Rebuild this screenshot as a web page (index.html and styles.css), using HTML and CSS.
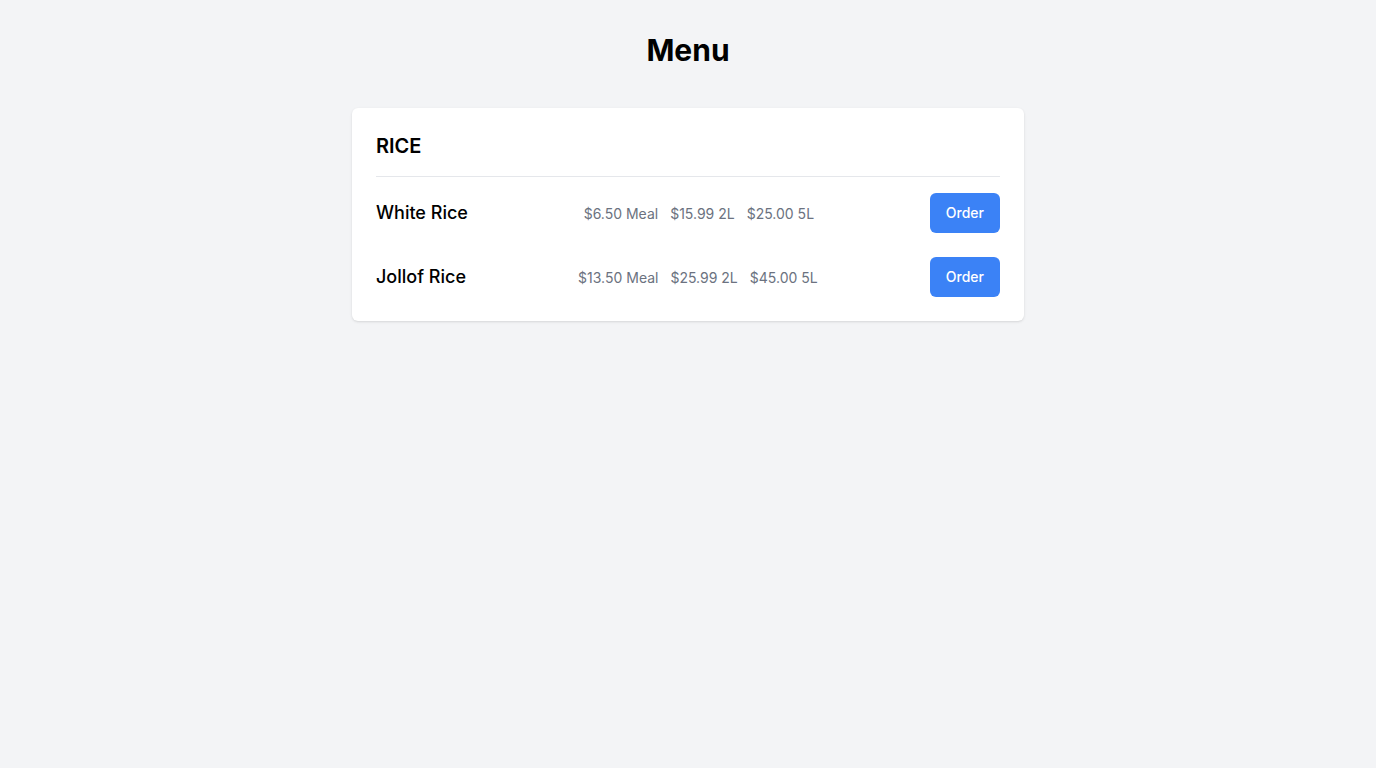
FILE: index.html
```html
<!DOCTYPE html>
<html lang="en">
<head>
<meta charset="utf-8">
<meta name="viewport" content="width=device-width, initial-scale=1">
<title>Menu</title>
<link rel="stylesheet" href="styles.css">
</head>
<body>
<main class="page">
  <h1 class="page-title">Menu</h1>
  <section class="card">
    <h2 class="category">RICE</h2>
    <ul class="items">
      <li class="item">
        <h3 class="item-name">White Rice</h3>
        <p class="prices"><span class="price">$6.50 Meal</span><span class="price">$15.99 2L</span><span class="price">$25.00 5L</span></p>
        <button class="order" type="button">Order</button>
      </li>
      <li class="item">
        <h3 class="item-name">Jollof Rice</h3>
        <p class="prices"><span class="price">$13.50 Meal</span><span class="price">$25.99 2L</span><span class="price">$45.00 5L</span></p>
        <button class="order" type="button">Order</button>
      </li>
    </ul>
  </section>
</main>
</body>
</html>
```
FILE: styles.css
```css
* {
  box-sizing: border-box;
  margin: 0;
  padding: 0;
}

body {
  min-height: 100vh;
  background: #f3f4f6;
  color: #000;
  font-family: Inter, "Liberation Sans", sans-serif;
  font-size: 16px;
  line-height: 24px;
}

.page {
  max-width: 672px;
  margin: 0 auto;
  padding: 32px 0;
}

.page-title {
  margin-bottom: 40px;
  font-size: 30px;
  font-weight: 700;
  line-height: 36px;
  text-align: center;
}

.card {
  padding: 24px;
  border-radius: 6px;
  background: #fff;
  box-shadow: 0 1px 3px rgba(0, 0, 0, 0.1), 0 1px 2px -1px rgba(0, 0, 0, 0.1);
}

.category {
  padding-bottom: 16px;
  border-bottom: 1px solid #e5e7eb;
  font-size: 20px;
  font-weight: 600;
  line-height: 28px;
}

.items {
  display: flex;
  flex-direction: column;
  gap: 24px;
  padding-top: 16px;
  list-style: none;
}

.item {
  display: flex;
  align-items: center;
  justify-content: space-between;
}

.item-name {
  font-size: 18px;
  font-weight: 500;
  line-height: 28px;
}

.price {
  color: #6b7280;
  font-size: 14px;
  line-height: 20px;
}

.price + .price {
  margin-left: 12px;
}

.order {
  height: 40px;
  padding: 0 16px;
  border: 0;
  border-radius: 6px;
  background: #3b82f6;
  color: #fff;
  font: 500 14px/20px Inter, "Liberation Sans", sans-serif;
  cursor: pointer;
}
```
